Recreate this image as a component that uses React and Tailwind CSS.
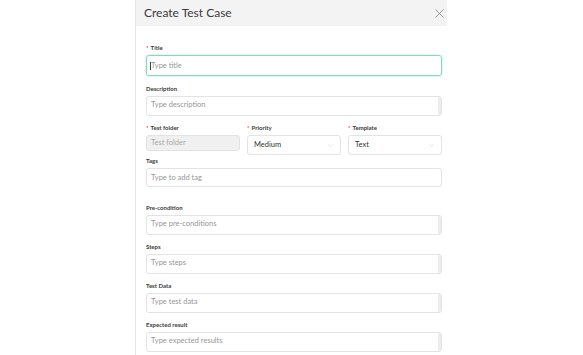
import { X, ChevronDown } from 'lucide-react';

const font = { fontFamily: 'Lato, "Open Sans", sans-serif' };

function Label({ children, required }) {
  return (
    <div className="text-[6px] font-bold text-[#3a3a3a] leading-[8px] mb-[3px]">
      {required && <span className="text-[#e5484d] mr-[2px]">*</span>}
      {children}
    </div>
  );
}

function TextArea({ placeholder }) {
  return (
    <div className="flex h-[20px] border border-[#e3e3e3] rounded-[3px] bg-white">
      <div className="flex-1 pl-[4px] pt-[3px] text-[7.5px] text-[#969696] leading-[10px]">{placeholder}</div>
      <div className="w-[3px] bg-[#ececec] rounded-r-[2px]" />
    </div>
  );
}

function Select({ value }) {
  return (
    <div className="flex items-center justify-between h-[20px] border border-[#e3e3e3] rounded-[3px] bg-white pl-[6px] pr-[6px]">
      <span className="text-[7.5px] text-[#333]">{value}</span>
      <ChevronDown size={7} strokeWidth={1.2} className="text-[#b5b5b5]" />
    </div>
  );
}

export default function App() {
  return (
    <div className="w-[583px] h-[355px] bg-white overflow-hidden flex" style={font}>
      <div className="w-[135px] shrink-0" />
      <div className="w-[312px] h-full shrink-0 border-l border-[#e4e4e4] overflow-hidden">
        <div className="h-[26px] bg-[#f3f3f3] flex items-center justify-between pl-[8px] pr-[0px]">
          <span className="text-[12px] font-normal text-[#3a3a3a]">Create Test Case</span>
          <X size={15} strokeWidth={1} className="text-[#666]" />
        </div>
        <div className="pl-[10px] pr-[5px] pt-[18px] flex flex-col">
          <Label required>Title</Label>
          <div className="h-[21px] border border-[#7fdcbc] rounded-[3px] flex items-center pl-[3px] shadow-[0_0_0_1px_#e3f7ef]">
            <span className="w-px h-[8px] bg-[#444]" />
            <span className="text-[7.5px] text-[#969696]">Type title</span>
          </div>

          <div className="mt-[9px]"><Label>Description</Label></div>
          <TextArea placeholder="Type description" />

          <div className="mt-[8px] grid grid-cols-3 gap-[7px]">
            <div>
              <Label required>Test folder</Label>
              <div className="h-[16px] bg-[#f0f0f0] border border-[#e3e3e3] rounded-[3px] flex items-center pl-[4px] text-[7.5px] text-[#a8a8a8]">Test folder</div>
            </div>
            <div>
              <Label required>Priority</Label>
              <Select value="Medium" />
            </div>
            <div>
              <Label required>Template</Label>
              <Select value="Text" />
            </div>
          </div>

          <div className="mt-[2px]"><Label>Tags</Label></div>
          <div className="h-[19px] border border-[#e3e3e3] rounded-[3px] flex items-center pl-[4px] text-[7.5px] text-[#969696]">Type to add tag</div>

          <div className="mt-[17px]"><Label>Pre-condition</Label></div>
          <TextArea placeholder="Type pre-conditions" />

          <div className="mt-[8px]"><Label>Steps</Label></div>
          <TextArea placeholder="Type steps" />

          <div className="mt-[8px]"><Label>Test Data</Label></div>
          <TextArea placeholder="Type test data" />

          <div className="mt-[8px]"><Label>Expected result</Label></div>
          <TextArea placeholder="Type expected results" />
        </div>
      </div>
    </div>
  );
}
